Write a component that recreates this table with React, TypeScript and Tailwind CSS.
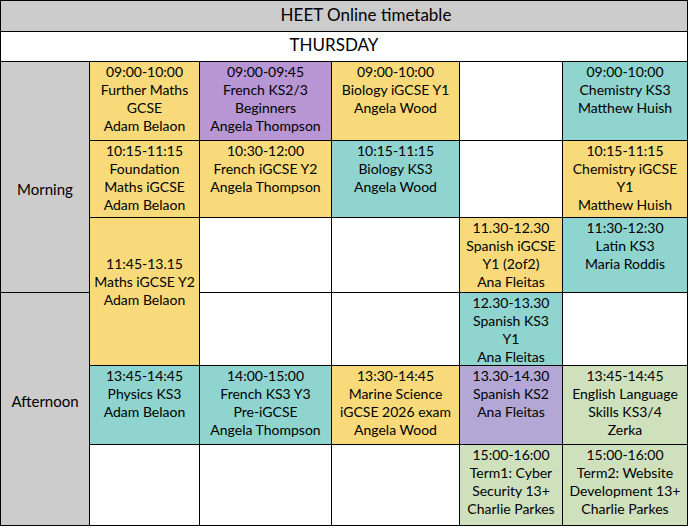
const Y = 'bg-[#f8da7b]'
const T = 'bg-[#8fd4cf]'
const P = 'bg-[#b796d3]'
const L = 'bg-[#b3a7d6]'
const G = 'bg-[#cfe0bd]'
const W = 'bg-white'

type Slot = { bg: string; lines?: string[]; span?: string; extra?: string }

function Cell({ bg, lines = [], span = '', extra = '' }: Slot) {
  return (
    <div className={`${bg} ${span} ${extra} flex flex-col items-center pt-px text-center`}>
      {lines.map((l, i) => (
        <div key={i} className="whitespace-nowrap">
          {l}
        </div>
      ))}
    </div>
  )
}

export default function App() {
  return (
    <div className="w-[690px] h-[528px] bg-white">
      <div
        className="grid w-[688px] bg-black gap-px p-px text-black text-[14px] leading-[18px]"
        style={{
          fontFamily: 'Lato, "Open Sans", sans-serif',
          gridTemplateColumns: '88px 109px 131px 127px 102px 124px',
          gridTemplateRows: '30px 29px 78px 76px 74px 72px 78px 80px',
        }}
      >
        {/* title */}
        <div className="col-span-6 bg-[#cccccc] flex items-center justify-center text-[17px] pl-[44px] pb-[2px]">
          HEET Online timetable
        </div>
        <div className="col-span-6 bg-white flex items-center justify-center text-[17px] pr-[20px] pb-[4px]">
          THURSDAY
        </div>

        {/* row 1 */}
        <div className="row-span-3 bg-[#cccccc] flex items-center justify-center text-[15px] pt-[24px]">
          Morning
        </div>
        <Cell bg={Y} lines={['09:00-10:00', 'Further Maths', 'GCSE', 'Adam Belaon']} />
        <Cell bg={P} lines={['09:00-09:45', 'French KS2/3', 'Beginners', 'Angela Thompson']} />
        <Cell bg={Y} lines={['09:00-10:00', 'Biology iGCSE Y1', 'Angela Wood']} />
        <Cell bg={W} />
        <Cell bg={T} lines={['09:00-10:00', 'Chemistry KS3', 'Matthew Huish']} />

        {/* row 2 */}
        <Cell bg={Y} lines={['10:15-11:15', 'Foundation', 'Maths iGCSE', 'Adam Belaon']} />
        <Cell bg={Y} lines={['10:30-12:00', 'French iGCSE Y2', 'Angela Thompson']} />
        <Cell bg={T} lines={['10:15-11:15', 'Biology KS3', 'Angela Wood']} />
        <Cell bg={W} />
        <Cell bg={Y} lines={['10:15-11:15', 'Chemistry iGCSE', 'Y1', 'Matthew Huish']} />

        {/* row 3 */}
        <Cell
          bg={Y}
          span="row-span-2"
          extra="!pt-[37px]"
          lines={['11:45-13.15', 'Maths iGCSE Y2', 'Adam Belaon']}
        />
        <Cell bg={W} />
        <Cell bg={W} />
        <Cell bg={Y} lines={['11.30-12.30', 'Spanish iGCSE', 'Y1 (2of2)', 'Ana Fleitas']} />
        <Cell bg={T} lines={['11:30-12:30', 'Latin KS3', 'Maria Roddis']} />

        {/* row 4 */}
        <div className="row-span-3 bg-[#cccccc] flex items-center justify-center text-[15px] pb-4">
          Afternoon
        </div>
        <Cell bg={W} />
        <Cell bg={W} />
        <Cell bg={T} lines={['12.30-13.30', 'Spanish KS3', 'Y1', 'Ana Fleitas']} />
        <Cell bg={W} />

        {/* row 5 */}
        <Cell bg={T} lines={['13:45-14:45', 'Physics KS3', 'Adam Belaon']} />
        <Cell bg={T} lines={['14:00-15:00', 'French KS3 Y3', 'Pre-iGCSE', 'Angela Thompson']} />
        <Cell bg={Y} lines={['13:30-14:45', 'Marine Science', 'iGCSE 2026 exam', 'Angela Wood']} />
        <Cell bg={L} lines={['13.30-14.30', 'Spanish KS2', 'Ana Fleitas']} />
        <Cell bg={G} lines={['13:45-14:45', 'English Language', 'Skills KS3/4', 'Zerka']} />

        {/* row 6 */}
        <Cell bg={W} />
        <Cell bg={W} />
        <Cell bg={W} />
        <Cell bg={G} lines={['15:00-16:00', 'Term1: Cyber', 'Security 13+', 'Charlie Parkes']} />
        <Cell bg={G} lines={['15:00-16:00', 'Term2: Website', 'Development 13+', 'Charlie Parkes']} />
      </div>
    </div>
  )
}
